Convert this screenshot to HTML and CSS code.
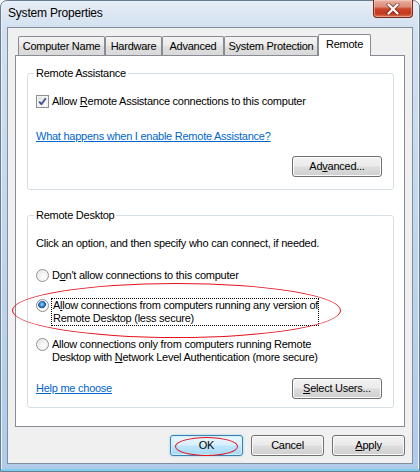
FILE: index.html
```html
<!DOCTYPE html>
<html>
<head>
<meta charset="utf-8">
<title>System Properties</title>
<link rel="stylesheet" href="styles.css">
</head>
<body>
<div class="window">
  <div class="titlebar">
    <span class="title">System Properties</span>
    <button class="close" aria-label="Close">
      <svg width="14" height="12" viewBox="0 0 14 12">
        <path d="M2.5 1.5 L11.5 10.5 M11.5 1.5 L2.5 10.5" stroke="#5a1c10" stroke-width="4" stroke-linecap="round" opacity="0.55"/>
        <path d="M2.5 1.5 L11.5 10.5 M11.5 1.5 L2.5 10.5" stroke="#ffffff" stroke-width="2.2" stroke-linecap="round"/>
      </svg>
    </button>
  </div>
  <div class="client">
    <div class="tabs">
      <div class="tab t-name">Computer Name</div>
      <div class="tab t-hw">Hardware</div>
      <div class="tab t-adv">Advanced</div>
      <div class="tab t-sp">System Protection</div>
      <div class="tab t-rem active">Remote</div>
    </div>
    <div class="panel">
      <fieldset class="group ra">
        <legend>Remote Assistance</legend>
        <div class="option">
          <span class="checkbox">
            <svg width="11" height="11" viewBox="0 0 11 11">
              <path d="M2.2 5.6 L4.4 8.2 L8.8 2.2" fill="none" stroke="#3f5590" stroke-width="1.9" stroke-linejoin="round"/>
            </svg>
          </span>
          <span class="label">Allow <u>R</u>emote Assistance connections to this computer</span>
        </div>
        <div class="link-row"><a class="link" href="#">What happens when I enable Remote Assistance?</a></div>
        <div class="btn-row"><button class="btn">Ad<u>v</u>anced...</button></div>
      </fieldset>
      <fieldset class="group rd">
        <legend>Remote Desktop</legend>
        <p class="intro">Click an option, and then specify who can connect, if needed.</p>
        <div class="option r1"><span class="radio"></span><span class="label">D<u>o</u>n't allow connections to this computer</span></div>
        <div class="option r2"><span class="radio checked"></span><span class="label focus">A<u>l</u>low connections from computers running any version of<br>Remote Desktop (less secure)</span></div>
        <div class="option r3"><span class="radio"></span><span class="label">Allow connections only from computers running Remote<br>Desktop with <u>N</u>etwork Level Authentication (more secure)</span></div>
        <div class="bottom-row">
          <a class="link" href="#">Help me choose</a>
          <button class="btn"><u>S</u>elect Users...</button>
        </div>
      </fieldset>
    </div>
    <div class="dialog-buttons">
      <button class="btn small default">OK</button>
      <button class="btn small">Cancel</button>
      <button class="btn small"><u>A</u>pply</button>
    </div>
  </div>
  <span class="annot annot-option"></span>
  <span class="annot annot-ok"></span>
</div>
</body>
</html>
```

FILE: styles.css
```css
* {
  box-sizing: border-box;
}

html,
body {
  margin: 0;
  padding: 0;
}

body {
  width: 420px;
  height: 472px;
  overflow: hidden;
  background: #ffffff;
  font-family: "Liberation Sans", Arial, sans-serif;
  font-size: 11px;
  letter-spacing: -0.25px;
  line-height: 13px;
  color: #000000;
}

.window {
  position: relative;
  width: 420px;
  height: 472px;
  display: flex;
  flex-direction: column;
  padding: 0 6px 7px 6px;
  border: 1px solid #6a7d90;
  border-radius: 7px 7px 0 0;
  background: linear-gradient(180deg, #e6edf6 0px, #d3e1f0 26px, #bfd5ec 55%, #aecbea 100%);
  box-shadow: inset 0 -2px 0 #7fcdf1, inset 1px 0 0 #e9f1f9, inset -1px 0 0 #e9f1f9;
}

.titlebar {
  height: 26px;
  flex: none;
  display: flex;
  align-items: center;
  padding-left: 1px;
}

.title {
  font-size: 12px;
  letter-spacing: -0.2px;
  color: #000000;
  padding-bottom: 1px;
}

.close {
  align-self: flex-start;
  margin: -1px 0 0 auto;
  width: 40px;
  height: 18px;
  padding: 0;
  display: flex;
  align-items: center;
  justify-content: center;
  border: 1px solid #7a2a1a;
  border-top: none;
  border-radius: 0 0 4px 4px;
  background: linear-gradient(180deg, #e9b2a2 0%, #dc8a74 40%, #c8462b 52%, #c33a1f 80%, #d9735a 100%);
  box-shadow: inset 0 0 0 1px rgba(255, 220, 210, 0.45);
}

.client {
  flex: 1;
  display: flex;
  flex-direction: column;
  border: 1px solid #7f8fa0;
  background: #f0f0f0;
  padding: 6px 7px 7px 7px;
}

.tabs {
  height: 21px;
  flex: none;
  display: flex;
  align-items: flex-start;
  padding-left: 3px;
}

.tab {
  height: 19px;
  margin-top: 2px;
  padding-top: 3px;
  text-align: center;
  white-space: nowrap;
  border: 1px solid #898c95;
  border-bottom: none;
  border-radius: 2px 2px 0 0;
  background: linear-gradient(180deg, #f3f3f3 0%, #ebebeb 45%, #dfdfdf 55%, #d9d9d9 100%);
}

.t-name { width: 87px; }
.t-hw { width: 57px; }
.t-adv { width: 62px; }
.t-sp { width: 94px; }

.tab.active {
  width: 53px;
  height: 22px;
  margin-top: 0;
  margin-left: 0;
  background: #ffffff;
  z-index: 1;
}

.panel {
  flex: 1;
  display: flex;
  flex-direction: column;
  border: 1px solid #898c95;
  background: #ffffff;
  padding: 0 10px 0 11px;
}

.group {
  margin: 0;
  min-width: 0;
  border: 1px solid #d5dfe5;
  border-radius: 3px;
  padding: 15px 11px 12px 8px;
}

.group legend {
  padding: 0 2px;
  margin-left: -2px;
  line-height: 13px;
}

.ra {
  margin-top: 11px;
}

.rd {
  margin-top: 19px;
  padding-bottom: 8px;
}

.option {
  display: flex;
  align-items: flex-start;
}

.label {
  margin-left: 3px;
  white-space: nowrap;
}

.checkbox {
  flex: none;
  width: 13px;
  height: 13px;
  display: flex;
  align-items: center;
  justify-content: center;
  border: 1px solid #8e8f8f;
  background: linear-gradient(135deg, #dcdcdc 0%, #f0f0f0 50%, #fdfdfd 100%);
  box-shadow: inset 0 0 0 1px #f4f4f4;
}

.radio {
  flex: none;
  width: 13px;
  height: 13px;
  border-radius: 50%;
  border: 1px solid #8e8f8f;
  background: radial-gradient(circle at 60% 65%, #ffffff 0%, #f1f1f1 45%, #d4d4d4 100%);
  box-shadow: inset 0 0 0 1px #f6f6f6;
}

.radio.checked {
  background:
    radial-gradient(circle at 45% 40%, #a9dbff 0px, #3a8fd6 2px, #1a4f93 3.6px, transparent 4.2px),
    radial-gradient(circle at 60% 65%, #ffffff 0%, #f1f1f1 45%, #d4d4d4 100%);
}

.focus {
  outline: 1px dotted #000000;
  outline-offset: 0;
  padding-left: 1px;
}

.link-row {
  margin-top: 22px;
}

.link {
  color: #0066cc;
  text-decoration: underline;
}

.btn-row {
  margin-top: 13px;
  display: flex;
  justify-content: flex-end;
}

.btn {
  width: 90px;
  height: 21px;
  padding: 0 0 1px 0;
  font-family: inherit;
  font-size: 11px;
  letter-spacing: -0.25px;
  color: #000000;
  border: 1px solid #707070;
  border-radius: 3px;
  background: linear-gradient(180deg, #f2f2f2 0%, #ebebeb 48%, #dddddd 52%, #cfcfcf 100%);
  box-shadow: inset 0 0 0 1px #fbfbfb;
}

.intro {
  margin: 0;
}

.r1 {
  margin-top: 19px;
}

.r2 {
  margin-top: 17px;
}

.r2 .label {
  margin-left: 3px;
}

.r3 {
  margin-top: 13px;
}

.bottom-row {
  margin-top: 14px;
  display: flex;
  justify-content: space-between;
  align-items: center;
}

.dialog-buttons {
  flex: none;
  margin-top: 8px;
  display: flex;
  justify-content: flex-end;
  gap: 8px;
}

.btn.small {
  width: 73px;
}

.btn.default {
  border-color: #3c7fb1;
  background: linear-gradient(180deg, #eaf6fd 0%, #d9f0fc 48%, #bee6fd 52%, #a7d9f5 100%);
  box-shadow: inset 0 0 0 1px #d0f0ff, 0 0 2px #7cc6ee;
}

.annot {
  position: absolute;
  border: 1.6px solid #e3141e;
  border-radius: 50%;
  pointer-events: none;
}

.annot-option {
  left: 11px;
  top: 282px;
  width: 329px;
  height: 55px;
}

.annot-ok {
  left: 174px;
  top: 436px;
  width: 63px;
  height: 19px;
}
```
